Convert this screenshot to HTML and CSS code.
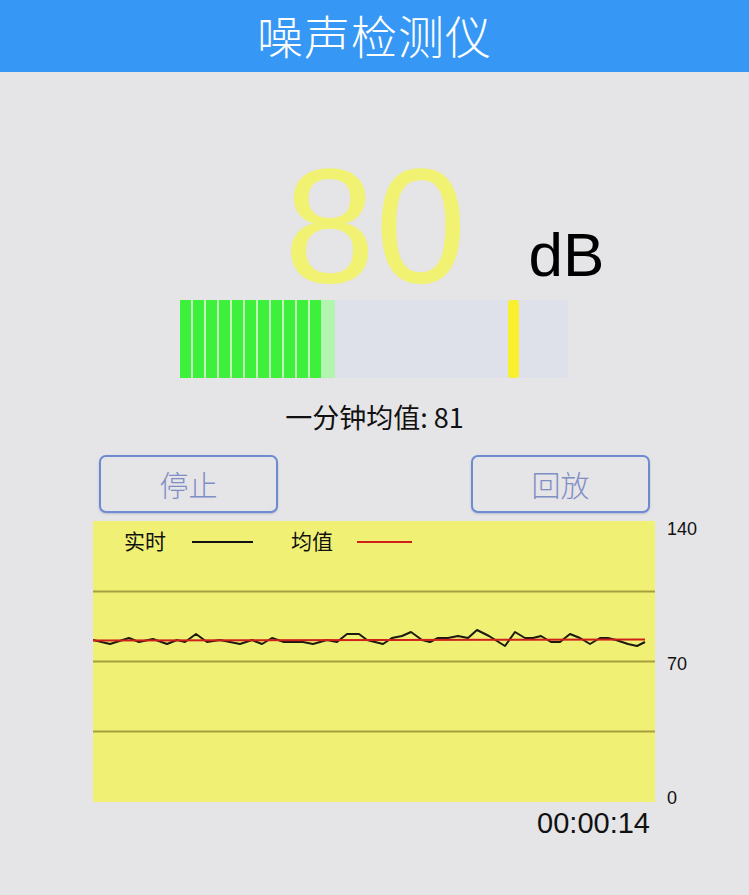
FILE: index.html
```html
<!DOCTYPE html>
<html lang="zh">
<head>
<meta charset="utf-8">
<title>噪声检测仪</title>
<link rel="stylesheet" href="styles.css">
</head>
<body>
<header class="topbar"><h1 class="title">噪声检测仪</h1></header>
<main class="page">
  <div class="reading">
    <span class="value">80</span>
    <span class="unit">dB</span>
  </div>
  <div class="meter">
    <div class="segments">
      <span class="seg"></span><span class="seg"></span><span class="seg"></span><span class="seg"></span>
      <span class="seg"></span><span class="seg"></span><span class="seg"></span><span class="seg"></span>
      <span class="seg"></span><span class="seg"></span><span class="seg"></span>
    </div>
    <span class="seg-fade"></span>
    <span class="peak" style="left: 328px"></span>
  </div>
  <p class="average">一分钟均值: 81</p>
  <div class="actions">
    <button class="btn">停止</button>
    <button class="btn">回放</button>
  </div>
  <div class="chart-row">
    <svg class="plot" width="562" height="281" viewBox="0 0 562 281">
      <rect x="0" y="0" width="562" height="281" fill="#f0f174"/>
      <line x1="0" y1="70.5" x2="562" y2="70.5" class="grid"/>
      <line x1="0" y1="140.5" x2="562" y2="140.5" class="grid"/>
      <line x1="0" y1="210.5" x2="562" y2="210.5" class="grid"/>
      <text x="31" y="28" class="legend">实时</text>
      <line x1="99" y1="21" x2="160" y2="21" stroke="#111" stroke-width="2"/>
      <text x="198" y="28" class="legend">均值</text>
      <line x1="264" y1="21" x2="319" y2="21" stroke="#d0201a" stroke-width="2"/>
      <polyline class="realtime" points="0,119 17,123 36,117 46,121 60,118 74,123 84,119 92,121 103,113 114,121 127,119 147,123 159,119 169,123 179,117 191,121 210,121 220,123 234,119 244,121 254,113 266,113 274,119 290,123 299,117 309,115 318,111 329,119 337,121 345,117 355,117 365,115 375,117 384,109 396,115 412,125 422,111 432,117 440,117 448,115 458,121 467,121 477,113 487,117 497,123 507,117 515,117 523,119 535,123 544,125 552,121"/>
      <line x1="0" y1="119.5" x2="552" y2="118.5" stroke="#d0201a" stroke-width="2"/>
    </svg>
    <div class="axis">
      <span>140</span>
      <span>70</span>
      <span>0</span>
    </div>
  </div>
  <div class="timer-row"><span class="timer">00:00:14</span></div>
</main>
</body>
</html>
```

FILE: styles.css
```css
html, body {
  margin: 0;
  padding: 0;
}
body {
  background: #e5e4e6;
  font-family: "Liberation Sans", "Noto Sans CJK SC", sans-serif;
  color: #111;
  width: 749px;
  height: 895px;
  overflow: hidden;
}
.topbar {
  height: 72px;
  background: #3797f5;
  display: flex;
  align-items: center;
  justify-content: center;
}
.title {
  margin: 0 0 4px 0;
  font-family: "Noto Sans CJK SC", sans-serif;
  font-weight: 300;
  font-size: 46px;
  line-height: 52px;
  color: #fff;
  letter-spacing: 1px;
}
.page {
  display: flex;
  flex-direction: column;
}
.reading {
  margin-top: 84px;
  height: 140px;
  display: flex;
  align-items: flex-start;
  padding-left: 284px;
}
.value {
  font-family: "Liberation Sans", sans-serif;
  font-size: 164px;
  line-height: 140px;
  color: #f1f172;
}
.unit {
  font-family: "Liberation Sans", sans-serif;
  font-size: 62px;
  line-height: 62px;
  margin-top: 68px;
  margin-left: 62px;
  color: #000;
}
.meter {
  position: relative;
  margin-top: 4px;
  margin-left: 180px;
  width: 388px;
  height: 78px;
  background: #dee0ea;
  display: flex;
}
.segments {
  display: flex;
  gap: 2px;
  background: #c4f2bc;
}
.seg {
  width: 11px;
  height: 78px;
  background: #3cf03c;
}
.seg-fade {
  width: 14px;
  height: 78px;
  background: #b2f5ae;
}
.peak {
  position: absolute;
  top: 0;
  width: 11px;
  height: 78px;
  border-radius: 3px;
  background: #f8ef30;
}
.average {
  margin: 24px 0 0 0;
  text-align: center;
  font-family: "Noto Sans CJK SC", sans-serif;
  font-size: 27px;
  line-height: 30px;
  color: #111;
}
.actions {
  margin-top: 23px;
  display: flex;
  justify-content: space-between;
  padding: 0 99px;
}
.btn {
  width: 179px;
  height: 58px;
  box-sizing: border-box;
  border: 2px solid #6d8bd3;
  border-radius: 7px;
  background: #e5e4e6;
  font-family: "Noto Sans CJK SC", sans-serif;
  font-size: 29px;
  font-weight: 300;
  color: #7f8ec5;
  padding: 0;
  box-shadow: 0 1px 2px rgba(60, 80, 140, 0.25);
}
.chart-row {
  margin-top: 8px;
  display: flex;
  align-items: flex-start;
  padding-left: 93px;
}
.plot {
  display: block;
}
.grid {
  stroke: #a49f3c;
  stroke-width: 2;
}
.legend {
  font-family: "Noto Sans CJK SC", sans-serif;
  font-size: 21px;
  fill: #111;
}
.realtime {
  fill: none;
  stroke: #1a1a10;
  stroke-width: 2;
  stroke-linejoin: round;
}
.axis {
  margin-top: -2px;
  height: 289px;
  padding-left: 12px;
  display: flex;
  flex-direction: column;
  justify-content: space-between;
  font-size: 18px;
  line-height: 20px;
  color: #111;
}
.timer-row {
  display: flex;
  justify-content: flex-end;
  padding-right: 99px;
}
.timer {
  font-size: 29px;
  line-height: 30px;
  color: #111;
}
```
